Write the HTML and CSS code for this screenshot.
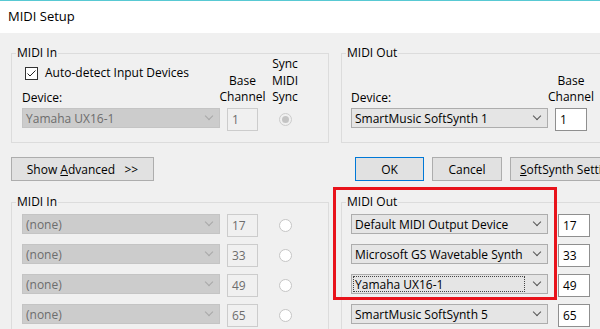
FILE: index.html
```html
<!DOCTYPE html>
<html lang="en">
<head>
    <meta charset="UTF-8">
    <meta name="viewport" content="width=device-width, initial-scale=1.0">
    <title>MIDI Setup</title>
    <link rel="stylesheet" href="styles.css">
</head>
<body>

    <div class="titlebar">MIDI Setup</div>

    <div class="dialog">
        <!-- top: current devices -->
        <div class="group group-top">
            <span class="group-label">MIDI In</span>
            <div class="device-grid">
                <div class="head-device">
                    <label class="check"><span class="checkbox"><svg width="11" height="11" viewBox="0 0 11 11"><path d="M1.5 5.5 L4 8 L9.5 2.5" fill="none" stroke="#222" stroke-width="1"/></svg></span>Auto-detect Input Devices</label>
                    <span class="device-label">Device:</span>
                </div>
                <div class="head-center"><span class="line">Base</span><span class="line">Channel</span></div>
                <div class="head-center"><span class="line sync-top">Sync</span><span class="line">MIDI</span><span class="line">Sync</span></div>

                <div class="combo disabled"><span class="value">Yamaha UX16-1</span></div>
                <div class="channel disabled">1</div>
                <div class="radio-cell"><span class="radio checked"></span></div>
            </div>
        </div>

        <div class="group group-top out">
            <span class="group-label">MIDI Out</span>
            <div class="device-grid">
                <div class="head-device">
                    <span class="device-label">Device:</span>
                </div>
                <div class="head-center"><span class="line">Base</span><span class="line">Channel</span></div>

                <div class="combo"><span class="value">SmartMusic SoftSynth 1</span></div>
                <div class="channel">1</div>
            </div>
        </div>

        <!-- buttons -->
        <div class="button-row">
            <button class="btn btn-advanced">Show <u>A</u>dvanced&nbsp;&nbsp; &gt;&gt;</button>
        </div>
        <div class="button-row actions">
            <button class="btn btn-ok">OK</button>
            <button class="btn btn-cancel">Cancel</button>
            <button class="btn btn-softsynth"><u>S</u>oftSynth Settings</button>
        </div>

        <!-- bottom: advanced ports -->
        <div class="group group-bottom">
            <span class="group-label">MIDI In</span>
            <div class="rows">
                <div class="combo disabled"><span class="value">(none)</span></div>
                <div class="channel disabled">17</div>
                <div class="radio-cell"><span class="radio"></span></div>

                <div class="combo disabled"><span class="value">(none)</span></div>
                <div class="channel disabled">33</div>
                <div class="radio-cell"><span class="radio"></span></div>

                <div class="combo disabled"><span class="value">(none)</span></div>
                <div class="channel disabled">49</div>
                <div class="radio-cell"><span class="radio"></span></div>

                <div class="combo disabled"><span class="value">(none)</span></div>
                <div class="channel disabled">65</div>
                <div class="radio-cell"><span class="radio"></span></div>
            </div>
        </div>

        <div class="group group-bottom out">
            <span class="group-label">MIDI Out</span>
            <div class="highlight"></div>
            <div class="rows">
                <div class="combo"><span class="value">Default MIDI Output Device</span></div>
                <div class="channel">17</div>

                <div class="combo"><span class="value">Microsoft GS Wavetable Synth</span></div>
                <div class="channel">33</div>

                <div class="combo focused"><span class="value">Yamaha UX16-1</span></div>
                <div class="channel">49</div>

                <div class="combo"><span class="value">SmartMusic SoftSynth 5</span></div>
                <div class="channel">65</div>
            </div>
        </div>
    </div>

</body>
</html>
```

FILE: styles.css
```css
* {
    box-sizing: border-box;
}
html, body {
    margin: 0;
}
body {
    width: 600px;
    height: 329px;
    overflow: hidden;
    background-color: #f0f0f0;
    font-family: "Open Sans", "Noto Sans", sans-serif;
    font-size: 12px;
    line-height: 15px;
    color: #000;
}
.titlebar {
    height: 33px;
    padding: 6px 8px 0;
    border-top: 1px solid #58c9d3;
    background-color: #fff;
    font-size: 13px;
    line-height: 18px;
}
.dialog {
    display: grid;
    grid-template-columns: 318px 330px;
    column-gap: 12px;
    padding: 20px 0 0 11px;
}

/* group boxes */
.group {
    position: relative;
    border: 1px solid #dcdcdc;
}
.group-label {
    position: absolute;
    top: -9px;
    left: 4px;
    padding: 0 1px;
    background-color: #f0f0f0;
}
.group-top {
    padding: 3px 0 11px 10px;
}
.group-top.out {
    padding-left: 9px;
}
.group-bottom {
    margin-top: 21px;
    height: 160px;
    padding: 11px 0 0 10px;
}
.group-bottom.out {
    padding-left: 9px;
}

.device-grid, .rows {
    display: grid;
    grid-template-columns: 198px 31px 40px;
    column-gap: 7px;
    align-items: start;
}
.device-grid {
    grid-template-rows: 48px auto;
    row-gap: 3px;
}
.rows {
    grid-auto-rows: 23px;
    row-gap: 7px;
}
.out .device-grid {
    grid-template-columns: 197px 32px;
}
.out .rows {
    grid-template-columns: 197px 32px;
    column-gap: 10px;
}

.head-device {
    align-self: end;
    display: flex;
    flex-direction: column;
}
.check {
    display: flex;
    align-items: flex-end;
    gap: 7px;
    margin-left: 3px;
    margin-bottom: 10px;
}
.checkbox {
    display: flex;
    align-items: center;
    justify-content: center;
    width: 13px;
    height: 13px;
    border: 1px solid #333;
    background-color: #fff;
}
.head-center {
    align-self: end;
    justify-self: center;
    display: flex;
    flex-direction: column;
    align-items: center;
    white-space: nowrap;
}
.head-center .line {
    height: 16px;
    line-height: 16px;
}
.sync-top {
    margin-bottom: 1px;
}

/* controls */
.combo {
    display: flex;
    align-items: center;
    height: 20px;
    padding-left: 2px;
    border: 1px solid #adadad;
    background-color: #e5e5e5;
    white-space: nowrap;
}
.combo .value {
    flex: 1;
    align-self: stretch;
    display: flex;
    align-items: center;
    padding-left: 1px;
}
.combo::after {
    content: "";
    flex: none;
    width: 5px;
    height: 5px;
    margin: 0 7px 0 8px;
    border-right: 1px solid #555;
    border-bottom: 1px solid #555;
    transform: translateY(-2px) rotate(45deg);
}
.combo.disabled {
    background-color: #cccccc;
    border-color: #c4c4c4;
    color: #6d6d6d;
}
.combo.disabled::after {
    border-color: #a8a8a8;
}
.combo.focused .value {
    margin: 1px 0 1px -1px;
    border: 1px dotted #444;
    padding-left: 1px;
}
.combo.focused::after {
    margin-left: 9px;
}

.channel {
    height: 23px;
    padding-left: 4px;
    border: 1px solid #8f8f8f;
    background-color: #fff;
    line-height: 21px;
}
.channel.disabled {
    border-color: #cccccc;
    background-color: #f0f0f0;
    color: #6d6d6d;
}

.radio-cell {
    align-self: center;
    justify-self: center;
    display: flex;
}
.radio {
    width: 13px;
    height: 13px;
    border: 1px solid #c6c6c6;
    border-radius: 50%;
    background-color: #fff;
}
.radio.checked {
    display: flex;
    align-items: center;
    justify-content: center;
    background-color: #f0f0f0;
    border-color: #cccccc;
}
.radio.checked::after {
    content: "";
    width: 7px;
    height: 7px;
    border-radius: 50%;
    background-color: #c4c4c4;
}

/* buttons */
.button-row {
    display: flex;
    gap: 8px;
    margin-top: 14px;
}
.actions {
    padding-left: 14px;
}
.btn {
    height: 24px;
    padding: 0;
    border: 1px solid #adadad;
    background-color: #e1e1e1;
    font-family: inherit;
    font-size: 12px;
    color: #000;
    white-space: nowrap;
}
.btn-advanced {
    width: 143px;
}
.btn-ok {
    width: 69px;
    border-color: #0078d7;
}
.btn-cancel {
    width: 70px;
}
.btn-softsynth {
    flex: none;
    width: 130px;
    padding-left: 9px;
    text-align: left;
}

.highlight {
    position: absolute;
    left: -9px;
    top: -16px;
    width: 224px;
    height: 113px;
    border: 3px solid #e8131b;
}
```
